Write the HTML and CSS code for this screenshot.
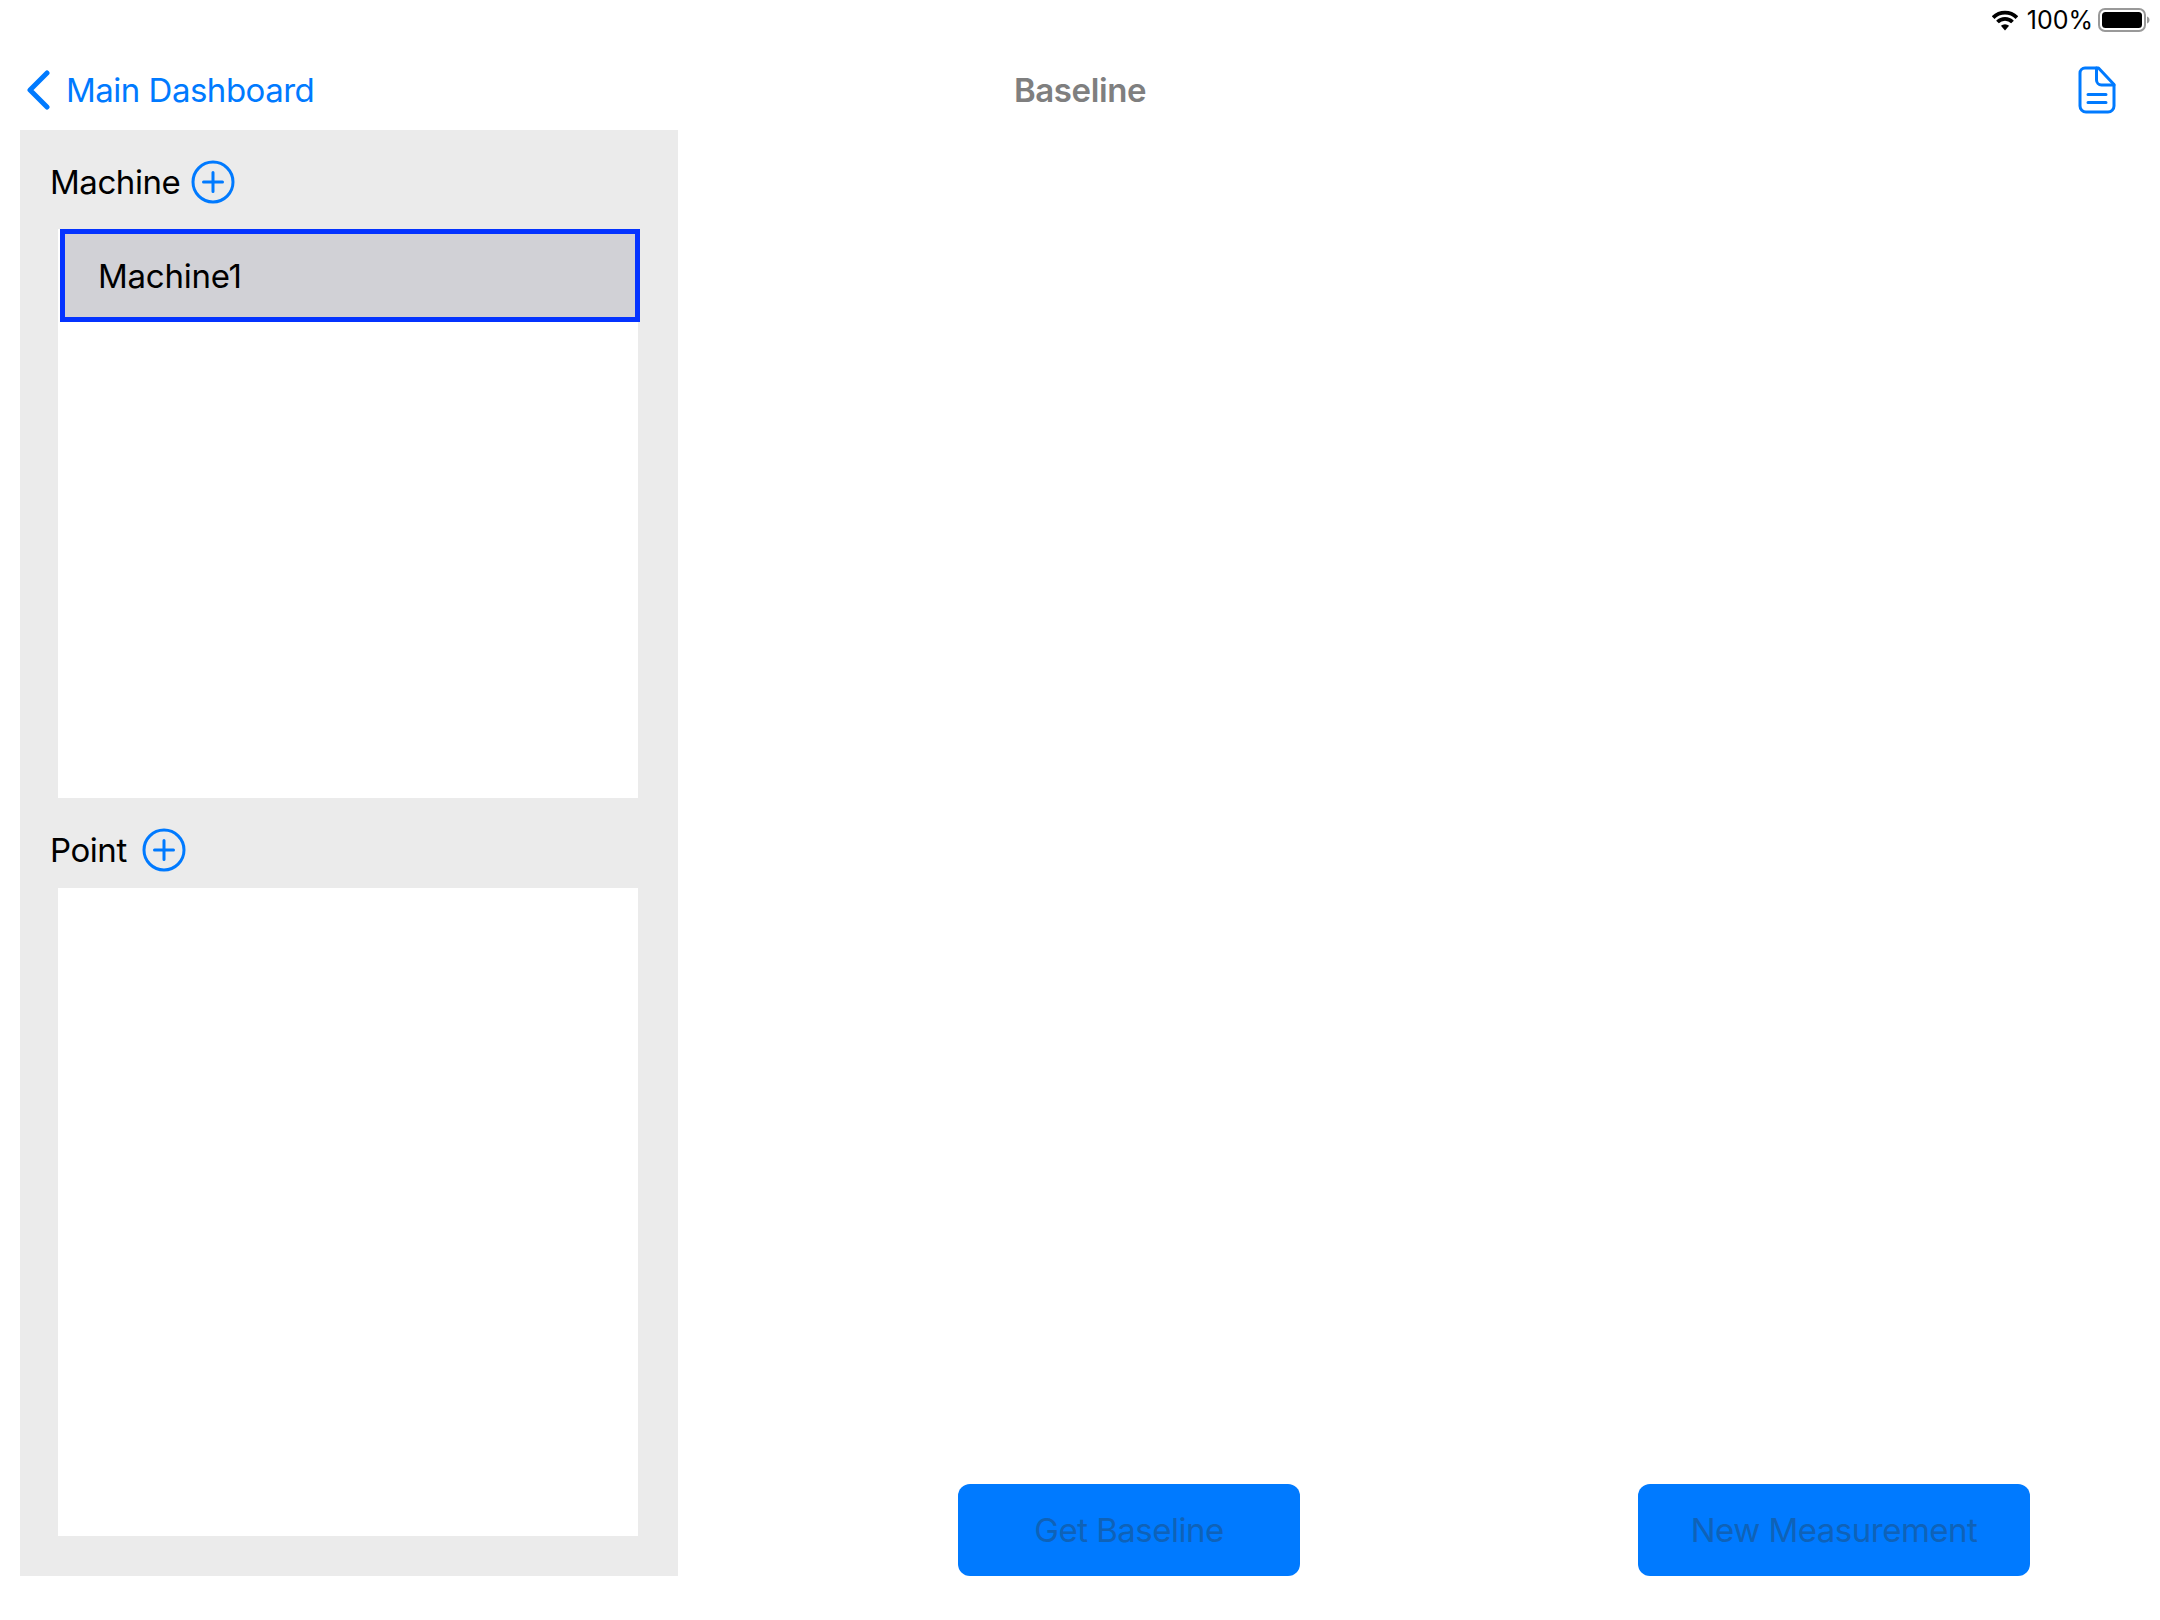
FILE: index.html
```html
<!DOCTYPE html>
<html lang="en">
<head>
<meta charset="utf-8">
<title>Baseline</title>
<link rel="stylesheet" href="styles.css">
</head>
<body>
<div class="status">
  <svg class="wifi" width="26" height="21" viewBox="0 0 26 21"><g fill="none" stroke="#000" stroke-width="3.800"><path d="M1.120 7.620A16.800 16.800 0 0 1 24.880 7.620"/><path d="M5.500 12A10.600 10.600 0 0 1 20.500 12"/></g><path d="M13 20.500 8.900 15.800A6 6 0 0 1 17.100 15.800z"/></svg>
  <span class="pct">100%</span>
  <svg class="battery" width="52" height="24" viewBox="0 0 52 24"><rect x="1" y="1" width="46" height="22" rx="6" fill="none" stroke="#999" stroke-width="2"/><rect x="4" y="4" width="40" height="16" rx="3.500"/><path d="M49 8.500c1.500.4 2.500 1.800 2.500 3.500s-1 3.100-2.500 3.500z" fill="#999"/></svg>
</div>
<header class="nav">
  <a class="back">
    <svg width="24" height="40" viewBox="0 0 24 40"><path d="M21 3 4 20l17 17" fill="none" stroke="#007aff" stroke-width="5" stroke-linecap="round" stroke-linejoin="round"/></svg>
    <span>Main Dashboard</span>
  </a>
  <h1 class="title">Baseline</h1>
  <svg class="doc" width="38" height="48" viewBox="0 0 38 48"><g fill="none" stroke="#007aff" stroke-width="3" stroke-linecap="round" stroke-linejoin="round"><path d="M7 2h13.500L36 18.500V40a6 6 0 0 1-6 6H8a6 6 0 0 1-6-6V7a5 5 0 0 1 5-5z"/><path d="M18.500 2v12a5 5 0 0 0 5 5H36"/><path d="M10 28.500h18M10 36.500h18"/></g></svg>
</header>
<main class="main">
  <aside class="panel">
    <div class="head head-machine">
      <span>Machine</span>
      <svg class="add" width="44" height="44" viewBox="0 0 44 44"><circle cx="22" cy="22" r="20" fill="none" stroke="#007aff" stroke-width="3"/><path d="M22 12.500v19M12.500 22h19" stroke="#007aff" stroke-width="3" stroke-linecap="round"/></svg>
    </div>
    <div class="list list-machine">
      <div class="row">Machine1</div>
    </div>
    <div class="head head-point">
      <span>Point</span>
      <svg class="add" width="44" height="44" viewBox="0 0 44 44"><circle cx="22" cy="22" r="20" fill="none" stroke="#007aff" stroke-width="3"/><path d="M22 12.500v19M12.500 22h19" stroke="#007aff" stroke-width="3" stroke-linecap="round"/></svg>
    </div>
    <div class="list list-point"></div>
  </aside>
  <section class="content">
    <button class="btn btn-baseline">Get Baseline</button>
    <button class="btn btn-measure">New Measurement</button>
  </section>
</main>
</body>
</html>
```
FILE: styles.css
```css
* { box-sizing: border-box; }
html, body { margin: 0; padding: 0; }
body {
  width: 2160px;
  height: 1620px;
  background: #fff;
  font-family: Inter, "Liberation Sans", sans-serif;
  color: #000;
  overflow: hidden;
}
.status {
  height: 40px;
  display: flex;
  align-items: center;
  justify-content: flex-end;
  padding-right: 10px;
}
.wifi { margin-right: 9px; }
.pct { font-size: 25px; margin-right: 5px; }
.nav {
  height: 90px;
  display: grid;
  grid-template-columns: 1fr auto 1fr;
  align-items: center;
  padding: 10px 44px 0;
}
.back {
  display: flex;
  align-items: center;
  gap: 16px;
  margin-left: -18px;
  color: #007aff;
  font-size: 33px;
  letter-spacing: -0.5px;
}
.title {
  margin: 0;
  font-size: 33px;
  font-weight: 600;
  letter-spacing: -0.4px;
  color: #7f7f7f;
}
.doc { justify-self: end; }
.main {
  display: flex;
  height: 1446px;
  padding-left: 20px;
}
.panel {
  width: 658px;
  background: #ebebeb;
  display: flex;
  flex-direction: column;
}
.head {
  display: flex;
  align-items: center;
  gap: 11px;
  padding-left: 30px;
  font-size: 33px;
  letter-spacing: -0.45px;
}
.head-machine { height: 99px; padding-top: 5px; }
.head-point { height: 90px; padding-top: 14px; gap: 15px; }
.list {
  margin: 0 40px 0 38px;
  background: #fff;
}
.list-machine { height: 569px; }
.list-point { height: 648px; }
.row {
  width: 580px;
  height: 93px;
  margin-left: 2px;
  background: #d1d1d6;
  border: 5px solid #0433ff;
  display: flex;
  align-items: center;
  padding-left: 33px;
  font-size: 33px;
  letter-spacing: -0.25px;
}
.content {
  flex: 1;
  display: flex;
  align-items: flex-end;
  padding-left: 280px;
}
.btn {
  height: 92px;
  border: 0;
  border-radius: 12px;
  background: #007aff;
  color: #0f62b8;
  font: 400 33px Inter, "Liberation Sans", sans-serif;
  letter-spacing: -0.5px;
  padding: 0;
}
.btn-baseline { width: 342px; }
.btn-measure { width: 392px; margin-left: 338px; }
```
